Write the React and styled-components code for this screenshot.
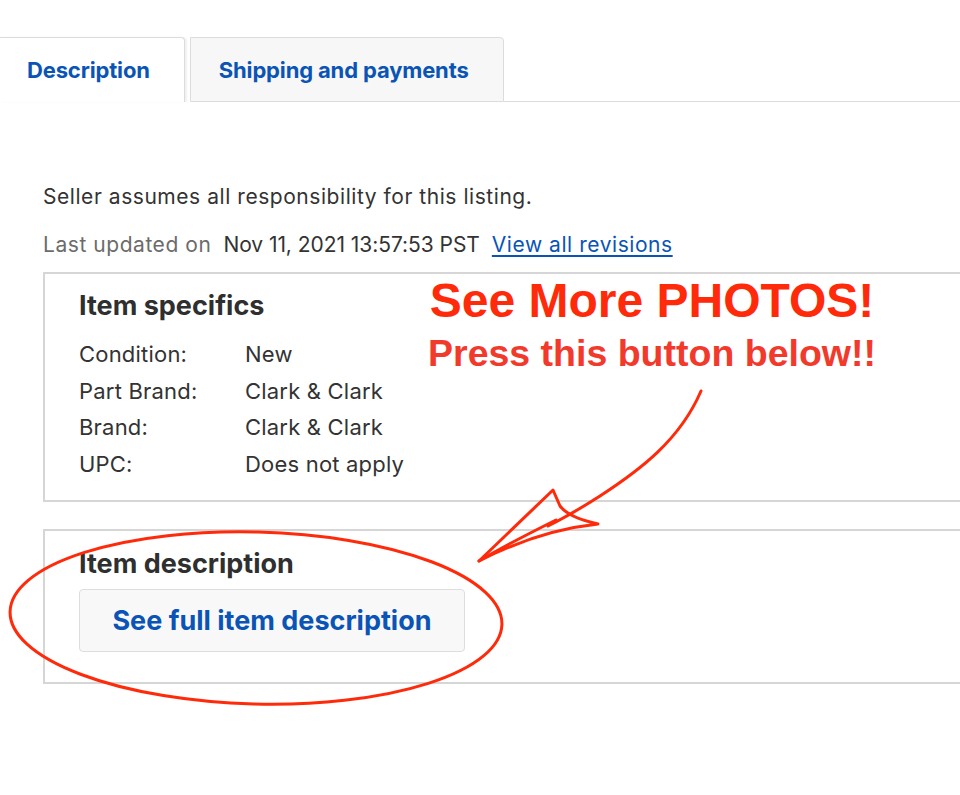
import React from 'react'
import styled, { createGlobalStyle } from 'styled-components'

const GlobalStyle = createGlobalStyle`
  html, body {
    margin: 0;
    padding: 0;
    background: #ffffff;
    overflow: hidden;
  }
  body {
    font-family: Inter, "Open Sans", Arial, sans-serif;
    color: #333333;
  }
`;

const specifics = [
  { label: 'Condition:', value: 'New' },
  { label: 'Part Brand:', value: 'Clark & Clark' },
  { label: 'Brand:', value: 'Clark & Clark' },
  { label: 'UPC:', value: 'Does not apply' },
];

const App = () => {
  return (
    <Page>
      <GlobalStyle />
      <TabBar>
        <Tab active>Description</Tab>
        <Tab>Shipping and payments</Tab>
        <TabFill />
      </TabBar>

      <Content>
        <Notice>Seller assumes all responsibility for this listing.</Notice>
        <Updated>
          <Muted>Last updated on</Muted>
          <Strong>Nov 11, 2021 13:57:53 PST</Strong>
          <Link href="#">View all revisions</Link>
        </Updated>

        <Section>
          <SectionTitle>Item specifics</SectionTitle>
          <SpecList>
            {specifics.map((s) => (
              <SpecRow key={s.label}>
                <span>{s.label}</span>
                <span>{s.value}</span>
              </SpecRow>
            ))}
          </SpecList>
        </Section>

        <Section desc>
          <SectionTitle>Item description</SectionTitle>
          <FullButton>See full item description</FullButton>
        </Section>
      </Content>

      <Callout>
        <CalloutBig>See More PHOTOS!</CalloutBig>
        <CalloutSmall>Press this button below!!</CalloutSmall>
      </Callout>

      <Scribble width="960" height="795" viewBox="0 0 960 795">
        <g fill="none" stroke="#ff2a0a" strokeWidth="3" strokeLinecap="round" strokeLinejoin="round">
          <path d="M701 391 C 680 440, 640 470, 600 496 C 575 512, 560 520, 548 526" />
          <path d="M479 561 L 553 490 L 560 506 C 566 514, 580 520, 598 524 C 560 528, 520 540, 479 561 Z" />
          <path d="M479 561 C 500 548, 530 533, 556 520" />
          <ellipse cx="256" cy="618" rx="246" ry="86" transform="rotate(1.5 256 618)" />
        </g>
      </Scribble>
    </Page>
  );
};

const Page = styled.div`
  position: relative;
  width: 960px;
  height: 795px;
  overflow: hidden;
`;

const TabBar = styled.div`
  display: flex;
  align-items: stretch;
  margin-top: 37px;
  height: 65px;
`;

const Tab = styled.div`
  display: flex;
  align-items: center;
  box-sizing: border-box;
  padding: ${(p) => (p.active ? '0 34px 0 27px' : '0 34px 0 28px')};
  margin-left: ${(p) => (p.active ? '0' : '5px')};
  background: ${(p) => (p.active ? '#ffffff' : '#f7f7f7')};
  border: 1px solid #dcdcdc;
  border-left: ${(p) => (p.active ? 'none' : '1px solid #dcdcdc')};
  border-bottom: ${(p) => (p.active ? 'none' : '1px solid #dcdcdc')};
  border-radius: 0 4px 0 0;
  box-shadow: ${(p) => (p.active ? '2px 0 2px rgba(0,0,0,0.06)' : 'none')};
  font-size: 22px;
  font-weight: 700;
  letter-spacing: -0.15px;
  color: #0a54b6;
`;

const TabFill = styled.div`
  flex: 1;
  border-bottom: 1px solid #dcdcdc;
`;

const Content = styled.div`
  padding: 82px 0 0 43px;
`;

const Notice = styled.div`
  font-size: 21px;
  line-height: 26px;
  color: #333333;
  letter-spacing: 0.55px;
`;

const Updated = styled.div`
  display: flex;
  align-items: baseline;
  gap: 12px;
  margin-top: 22px;
  font-size: 21px;
  line-height: 26px;
  letter-spacing: 0.55px;
`;

const Muted = styled.span`
  color: #6b6b6b;
`;

const Strong = styled.span`
  color: #333333;
  letter-spacing: -0.05px;
`;

const Link = styled.a`
  color: #0a54b6;
  text-decoration: underline;
  text-underline-offset: 3px;
`;

const Section = styled.div`
  box-sizing: border-box;
  margin-top: ${(p) => (p.desc ? '27px' : '14px')};
  margin-right: -20px;
  border: 2px solid #d6d6d6;
  padding: ${(p) => (p.desc ? '17px 0 30px 34px' : '16px 0 17px 34px')};
`;

const SectionTitle = styled.div`
  font-size: 27px;
  line-height: 32px;
  font-weight: 700;
  color: #2f2f2f;
`;

const SpecList = styled.div`
  margin-top: 14px;
  display: flex;
  flex-direction: column;
`;

const SpecRow = styled.div`
  display: grid;
  grid-template-columns: 166px 1fr;
  font-size: 22px;
  line-height: 36.7px;
  letter-spacing: 0.2px;
  color: #333333;
`;

const FullButton = styled.button`
  display: block;
  margin-top: 9px;
  width: 386px;
  height: 63px;
  background: #f8f8f8;
  border: 1px solid #dddddd;
  border-radius: 4px;
  font-family: inherit;
  font-size: 27px;
  font-weight: 700;
  color: #0a54b6;
  cursor: pointer;
`;

const Callout = styled.div`
  position: absolute;
  left: 412px;
  top: 274px;
  width: 480px;
  display: flex;
  flex-direction: column;
  align-items: center;
  font-family: "Liberation Sans", Arial, sans-serif;
  font-weight: 700;
`;

const CalloutBig = styled.div`
  font-size: 48px;
  line-height: 54px;
  color: #ff2a0a;
`;

const CalloutSmall = styled.div`
  font-size: 37.5px;
  line-height: 44px;
  color: #f23a2c;
  margin-top: 3px;
`;

const Scribble = styled.svg`
  position: absolute;
  left: 0;
  top: 0;
  pointer-events: none;
`;

export default App;
